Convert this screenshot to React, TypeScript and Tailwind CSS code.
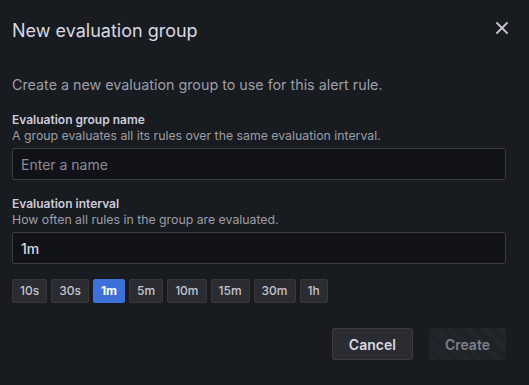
import React, { useState } from 'react'

const intervals = ['10s', '30s', '1m', '5m', '10m', '15m', '30m', '1h']

export default function App() {
  const [name, setName] = useState('')
  const [interval, setInterval] = useState('1m')

  return (
    <div className="w-[529px] h-[385px] bg-[#181b1f] text-[#ccccdc] pl-3 pr-[23px] font-['Inter','Liberation_Sans',sans-serif] overflow-hidden">
      {/* header */}
      <div className="flex items-start justify-between pt-5">
        <h2 className="text-[18px] leading-[22px] font-normal text-[#d8d9e2]">New evaluation group</h2>
        <button className="mt-[2px] -mr-[2px] text-[#c4c5d0]" aria-label="Close">
          <svg width="12" height="12" viewBox="0 0 12 12" fill="none" stroke="currentColor" strokeWidth="1.8" strokeLinecap="round">
            <path d="M1 1 L11 11 M11 1 L1 11" />
          </svg>
        </button>
      </div>

      <p className="mt-[33px] text-[14.3px] leading-5 text-[#9d9ea8]">
        Create a new evaluation group to use for this alert rule.
      </p>

      {/* group name */}
      <div className="mt-[17px]">
        <div className="text-[12px] leading-4 font-semibold text-[#ccccdc]">Evaluation group name</div>
        <div className="text-[12.3px] leading-4 text-[#9d9ea8]">A group evaluates all its rules over the same evaluation interval.</div>
        <input
          value={name}
          onChange={e => setName(e.target.value)}
          placeholder="Enter a name"
          className="mt-1 w-full h-8 px-2 bg-[#111217] border border-[#3b3d44] rounded-[2px] text-[14px] text-[#ccccdc] placeholder:text-[#8a8b94] outline-none"
        />
      </div>

      {/* interval */}
      <div className="mt-4">
        <div className="text-[12px] leading-4 font-semibold text-[#ccccdc]">Evaluation interval</div>
        <div className="text-[12.3px] leading-4 text-[#9d9ea8]">How often all rules in the group are evaluated.</div>
        <input
          value={interval}
          onChange={e => setInterval(e.target.value)}
          className="mt-1 w-full h-8 px-2 bg-[#111217] border border-[#3b3d44] rounded-[2px] text-[14px] font-medium text-[#d8d9e2] outline-none"
        />
      </div>

      <div className="mt-[15px] flex gap-1">
        {intervals.map(i => (
          <button
            key={i}
            onClick={() => setInterval(i)}
            className={
              i === interval
                ? 'h-6 px-[7px] rounded-[2px] border border-[#3d71d9] bg-[#3d71d9] text-[12px] font-bold text-white'
                : 'h-6 px-[7px] rounded-[2px] border border-[#36383e] bg-[#2a2c31] text-[12px] font-medium text-[#c4c5d0]'
            }
          >
            {i}
          </button>
        ))}
      </div>

      <div className="mt-[25px] flex justify-end gap-4">
        <button className="h-8 px-4 rounded-[2px] border border-[#393b41] bg-[#2a2c31] text-[14px] font-semibold text-[#d8d9e2]">
          Cancel
        </button>
        <button
          disabled
          className="h-8 px-4 rounded-[2px] bg-[repeating-linear-gradient(45deg,#25282d_0px,#25282d_1px,#1c1f23_1px,#1c1f23_2px)] text-[14px] font-semibold text-[#7e808a] cursor-not-allowed"
        >
          Create
        </button>
      </div>
    </div>
  )
}
